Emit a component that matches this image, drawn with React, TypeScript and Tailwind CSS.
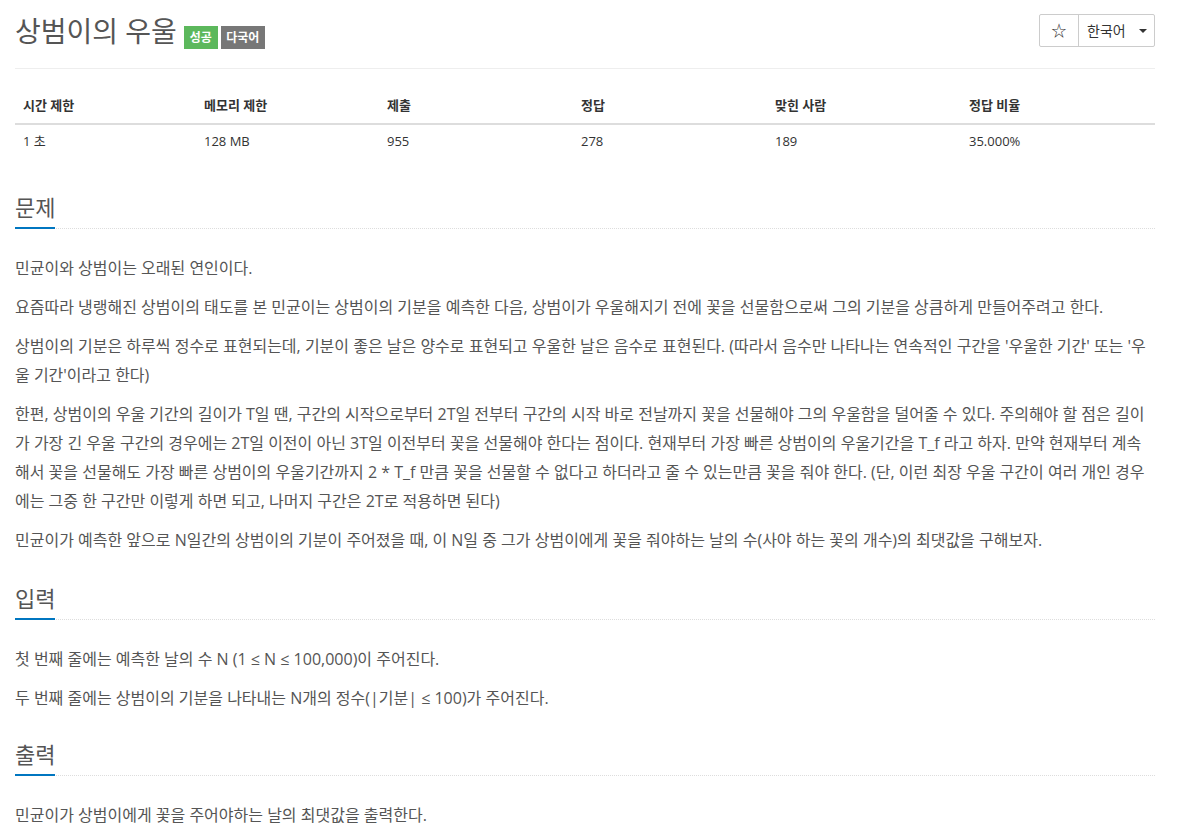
import React from "react";

const FONT = { fontFamily: '"Open Sans", "Noto Sans CJK KR", sans-serif' };

function Headline({ title }: { title: string }) {
  return (
    <div className="mt-[10px] mb-[25px] border-b border-dotted border-[#dddddd]">
      <h2 className="inline-block -mb-[1px] pb-[5px] border-b-2 border-[#0076c0] text-[22px] leading-[30px] text-[#555555]">
        {title}
      </h2>
    </div>
  );
}

function P({ children }: { children: React.ReactNode }) {
  return <p className="mb-[10px] text-[16px] leading-[29px] text-[#555555]">{children}</p>;
}

export default function App() {
  const heads = ["시간 제한", "메모리 제한", "제출", "정답", "맞힌 사람", "정답 비율"];
  const vals = ["1 초", "128 MB", "955", "278", "189", "35.000%"];
  const cols = "grid grid-cols-[181px_183px_194px_194px_194px_194px]";
  return (
    <div className="w-[1170px] px-[15px] bg-white min-h-[832px] overflow-hidden" style={FONT}>
      <div className="flex items-start justify-between pt-[10px] pb-[19px] border-b border-[#eeeeee]">
        <div className="flex items-start">
          <h1 className="mt-[4px] text-[28px] leading-[34px] text-[#555555]">상범이의 우울</h1>
          <span className="ml-[7px] mt-[16px] h-[23px] w-[34px] flex items-center justify-center bg-[#5cb85c] text-white text-[12px] font-bold">성공</span>
          <span className="ml-[3px] mt-[16px] h-[23px] w-[44px] flex items-center justify-center bg-[#777777] text-white text-[12px] font-bold">다국어</span>
        </div>
        <div className="mt-[4px] flex h-[33px] border border-[#cccccc] rounded-[2px] text-[14px] text-[#333333]">
          <div className="w-[39px] flex items-center justify-center border-r border-[#cccccc] text-[15px]">☆</div>
          <div className="w-[75px] flex items-center pl-[8px] gap-[13px]">
            <span>한국어</span>
            <span className="w-0 h-0 border-l-[4px] border-r-[4px] border-t-[4px] border-l-transparent border-r-transparent border-t-[#333333]"></span>
          </div>
        </div>
      </div>

      <div className="mt-[18px] text-[13px] text-[#333333]">
        <div className={`${cols} border-b-2 border-[#dddddd] font-bold`}>
          {heads.map((h) => (
            <div key={h} className="px-[8px] pt-[8px] pb-[8px] leading-[20px]">{h}</div>
          ))}
        </div>
        <div className={cols}>
          {vals.map((v) => (
            <div key={v} className="px-[8px] pt-[6px] pb-[8px] leading-[20px]">{v}</div>
          ))}
        </div>
      </div>

      <section className="mt-[33px]">
        <Headline title="문제" />
        <P>민균이와 상범이는 오래된 연인이다.</P>
        <P>요즘따라 냉랭해진 상범이의 태도를 본 민균이는 상범이의 기분을 예측한 다음, 상범이가 우울해지기 전에 꽃을 선물함으로써 그의 기분을 상큼하게 만들어주려고 한다.</P>
        <P>상범이의 기분은 하루씩 정수로 표현되는데, 기분이 좋은 날은 양수로 표현되고 우울한 날은 음수로 표현된다. (따라서 음수만 나타나는 연속적인 구간을 '우울한 기간' 또는 '우울 기간'이라고 한다)</P>
        <P>한편, 상범이의 우울 기간의 길이가 T일 땐, 구간의 시작으로부터 2T일 전부터 구간의 시작 바로 전날까지 꽃을 선물해야 그의 우울함을 덜어줄 수 있다. 주의해야 할 점은 길이가 가장 긴 우울 구간의 경우에는 2T일 이전이 아닌 3T일 이전부터 꽃을 선물해야 한다는 점이다. 현재부터 가장 빠른 상범이의 우울기간을 T_f 라고 하자. 만약 현재부터 계속해서 꽃을 선물해도 가장 빠른 상범이의 우울기간까지 2 * T_f 만큼 꽃을 선물할 수 없다고 하더라고 줄 수 있는만큼 꽃을 줘야 한다. (단, 이런 최장 우울 구간이 여러 개인 경우에는 그중 한 구간만 이렇게 하면 되고, 나머지 구간은 2T로 적용하면 된다)</P>
        <P>민균이가 예측한 앞으로 N일간의 상범이의 기분이 주어졌을 때, 이 N일 중 그가 상범이에게 꽃을 줘야하는 날의 수(사야 하는 꽃의 개수)의 최댓값을 구해보자.</P>
      </section>

      <section className="mt-[28px]">
        <Headline title="입력" />
        <P>첫 번째 줄에는 예측한 날의 수 N (1 ≤ N ≤ 100,000)이 주어진다.</P>
        <P>두 번째 줄에는 상범이의 기분을 나타내는 N개의 정수(|기분| ≤ 100)가 주어진다.</P>
      </section>

      <section className="mt-[26px]">
        <Headline title="출력" />
        <P>민균이가 상범이에게 꽃을 주어야하는 날의 최댓값을 출력한다.</P>
      </section>
    </div>
  );
}
